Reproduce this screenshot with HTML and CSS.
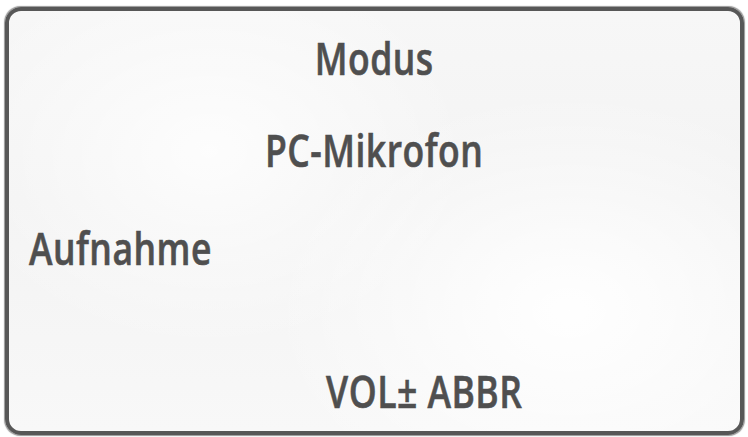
FILE: index.html
```html
<!DOCTYPE html>
<html lang="de">
<head>
<meta charset="utf-8">
<link rel="stylesheet" href="styles.css">
</head>
<body>
<div class="panel">
  <div class="row row-mode"><span class="txt">Modus</span></div>
  <div class="row row-src"><span class="txt">PC-Mikrofon</span></div>
  <div class="row row-rec"><span class="txt txt-left">Aufnahme</span></div>
  <div class="row row-vol"><span class="txt">VOL± ABBR</span></div>
</div>
</body>
</html>
```
FILE: styles.css
```css
html, body {
  margin: 0;
  padding: 0;
  background: #ffffff;
}
body {
  width: 748px;
  height: 437px;
  overflow: hidden;
}
.panel {
  box-sizing: border-box;
  margin: 7px 0 0 5px;
  width: 739px;
  height: 428px;
  border: 4px solid #575757;
  border-radius: 16px;
  box-shadow: 0 0 1px 0.5px rgba(80,80,80,0.6);
  background:
    radial-gradient(ellipse 300px 220px at 560px 300px, rgba(255,255,255,0.95), rgba(255,255,255,0)),
    radial-gradient(ellipse 260px 200px at 200px 140px, rgba(255,255,255,0.8), rgba(255,255,255,0)),
    linear-gradient(180deg, #f7f7f7 0%, #f3f3f3 45%, #f8f8f8 100%);
  padding-top: 25px;
  font-family: "Open Sans", "Liberation Sans", sans-serif;
  font-weight: 600;
  font-size: 45px;
  line-height: 44px;
  letter-spacing: 0.6px;
  color: #4f4f4f;
  -webkit-text-stroke: 0.6px #4f4f4f;
}
.row {
  height: 44px;
  text-align: center;
  white-space: nowrap;
}
.txt {
  display: inline-block;
  transform: scaleX(0.79);
  transform-origin: 50% 50%;
}
.row-src { margin-top: 48px; }
.row-rec { margin-top: 54px; text-align: left; padding-left: 20px; }
.txt-left { transform-origin: 0 50%; }
.row-vol { margin-top: 99px; padding-left: 100px; }
```
